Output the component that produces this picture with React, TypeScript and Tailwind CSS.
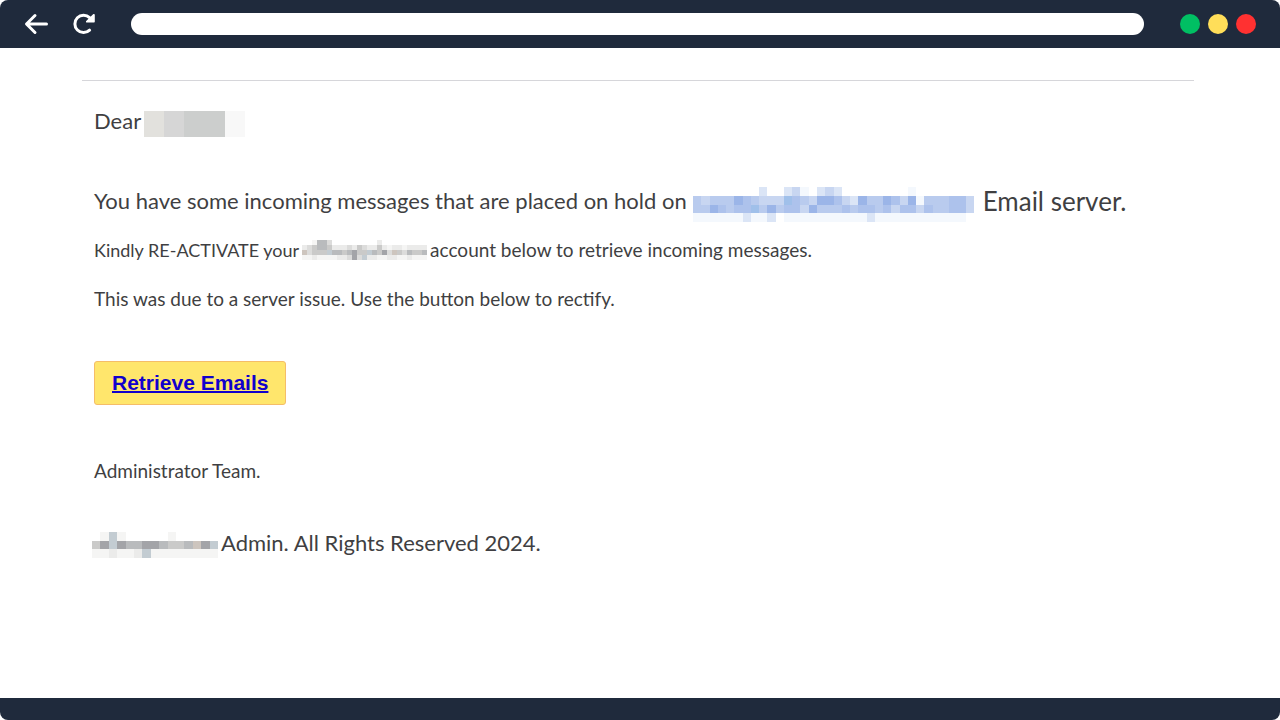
import type { ReactNode } from "react";

const NAME_COLORS: Record<string, string> = {
  a: "#e2e1dd",
  b: "#d6d6d6",
  c: "#cccecd",
  d: "#f8f8f8",
};

const BLUE_COLORS: Record<string, string> = {
  a: "#9bb5e8",
  b: "#adc2ec",
  c: "#b9cbee",
  d: "#c8d6f1",
  e: "#dbe5f6",
  f: "#f4f8fd",
  g: "#a0c0ea",
};

const GREY_COLORS: Record<string, string> = {
  a: "#a3a4a8",
  b: "#b9bbbd",
  c: "#cacac9",
  d: "#dcdcdb",
  e: "#ebebea",
  f: "#f5f5f4",
  g: "#c3ccd2",
  h: "#cdc5be",
};

const NAME_CELLS = ["abccd"];

const ADDRESS_CELLS = [
  "........e..edf.ede........f.......",
  "cdcccabcdddgbcdaabdeaccabdafcccbbd",
  "ccabcbbgcacbbdacccbcbbcbdbbdbccbbd",
  "ffffffeffe.ffffffffffefffffffffff.",
];

const DOMAIN_CELLS = [
  "..fbbd.........e.........",
  "edcbbceeedecdeecefeefeeee",
  "hdcccgbbcbaccgbcadhcdbccb",
  "ffeffffeedadgeeffeeffefff",
];

const ADMIN_CELLS = [
  ".fgf.....f.....",
  "cagabbaabccbhag",
  "ffeffegffffffff",
];

function Mosaic({
  cells,
  colors,
  className,
}: {
  cells: string[];
  colors: Record<string, string>;
  className: string;
}) {
  return (
    <svg
      aria-hidden="true"
      className={`shrink-0 ${className}`}
      preserveAspectRatio="none"
      shapeRendering="crispEdges"
      viewBox={`0 0 ${cells[0].length} ${cells.length}`}
    >
      {cells.flatMap((row, y) =>
        row.split("").map((key, x) =>
          colors[key] ? <rect key={`${x}-${y}`} x={x} y={y} width={1} height={1} fill={colors[key]} /> : null,
        ),
      )}
    </svg>
  );
}

function BackIcon() {
  return (
    <svg aria-hidden="true" className="h-6 w-6" fill="none" viewBox="0 0 24 24">
      <path d="M11 3.5 2.5 12l8.5 8.5M3 12h19.5" stroke="white" strokeLinecap="round" strokeLinejoin="round" strokeWidth="3" />
    </svg>
  );
}

function ReloadIcon() {
  return (
    <svg aria-hidden="true" className="h-6 w-6" fill="none" viewBox="0 0 24 24">
      <path d="M17.6 18.2A8.7 8.7 0 1 1 17.6 5.6" stroke="white" strokeLinecap="round" strokeWidth="3" />
      <path d="M22.8 2.9v6.6c0 .6-.4 1-1 1h-6.9c-.9 0-1.3-1-.7-1.6l6.9-6.7c.6-.6 1.7-.2 1.7.7Z" fill="white" />
    </svg>
  );
}

function BrowserBar() {
  return (
    <header className="flex h-12 items-center bg-[#1f2a3c] px-6">
      <button aria-label="Back" type="button">
        <BackIcon />
      </button>
      <button aria-label="Reload" className="ml-6" type="button">
        <ReloadIcon />
      </button>
      <input
        aria-label="Address"
        className="ml-[35px] h-[22px] min-w-0 flex-1 rounded-full bg-white px-4 text-sm outline-none"
        type="text"
      />
      <div className="ml-9 flex gap-2">
        <span className="size-5 rounded-full bg-[#00bf63]" />
        <span className="size-5 rounded-full bg-[#ffde59]" />
        <span className="size-5 rounded-full bg-[#ff3131]" />
      </div>
    </header>
  );
}

function Line({ className, children }: { className: string; children: ReactNode }) {
  return <p className={`flex whitespace-nowrap ${className}`}>{children}</p>;
}

export default function App() {
  return (
    <div className="bg-white">
      <div className="flex min-h-screen flex-col overflow-hidden rounded-lg bg-white">
        <BrowserBar />
        <main className="flex-1 pt-8 pr-[86px] pl-[82px] font-['Lato','Noto_Sans',sans-serif] text-[#3f3f42]">
          <hr className="border-[#d6d6da]" />
          <div className="pl-3">
            <Line className="mt-[30px] items-start gap-[3px] text-[22px] leading-5">
              <span>Dear</span>
              <Mosaic cells={NAME_CELLS} className="h-[26px] w-[101px]" colors={NAME_COLORS} />
            </Line>
            <Line className="mt-[50px] items-start text-[22px] leading-7">
              <span>You have some incoming messages that are placed on hold on</span>
              <Mosaic cells={ADDRESS_CELLS} className="ml-1.5 h-[35px] w-[281px]" colors={BLUE_COLORS} />
              <span className="ml-[9px] text-[26px]">Email server.</span>
            </Line>
            <Line className="mt-4 items-center gap-[3px] text-[19px] leading-6">
              <span className="text-[18px]">Kindly RE-ACTIVATE your</span>
              <Mosaic cells={DOMAIN_CELLS} className="h-5 w-[125px]" colors={GREY_COLORS} />
              <span>account below to retrieve incoming messages.</span>
            </Line>
            <Line className="mt-[25px] text-[19px] leading-6">This was due to a server issue. Use the button below to rectify.</Line>
            <a
              className="mt-[50px] inline-block rounded-[3px] border border-[#f5bd68] bg-[#ffe66c] px-[17px] py-2 font-['Liberation_Sans',Arial,sans-serif] text-[21px] leading-[26px] font-bold text-[#1100cc] underline decoration-2"
              href="#"
            >
              Retrieve Emails
            </a>
            <Line className="mt-[54px] text-[19px] leading-6">Administrator Team.</Line>
            <Line className="mt-[49px] -ml-0.5 items-start gap-[3px] text-[22px] leading-[22px]">
              <Mosaic cells={ADMIN_CELLS} className="h-[26px] w-[126px]" colors={GREY_COLORS} />
              <span>Admin. All Rights Reserved 2024.</span>
            </Line>
          </div>
        </main>
        <footer className="h-[22px] bg-[#1f2a3c]" />
      </div>
    </div>
  );
}
